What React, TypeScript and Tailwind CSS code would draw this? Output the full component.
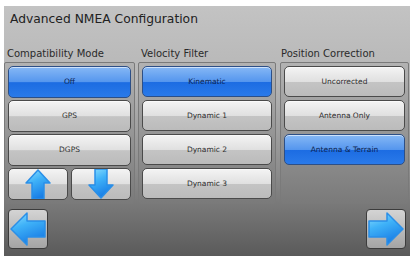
import clsx from "clsx"

const FONT = { fontFamily: '"DejaVu Sans", Verdana, sans-serif' }

const blueBtn =
  "bg-[linear-gradient(to_bottom,#86b8f5_0%,#5596ee_50%,#1c6ce2_52%,#2a7ae9_100%)] text-[#0b2350] border-[#2d4f86]"
const grayBtn =
  "bg-[linear-gradient(to_bottom,#f4f4f4_0%,#e0e0e0_50%,#c4c4c4_52%,#bbbbbb_100%)] text-[#2e2e2e] border-[#4a4a4a]"

function OptionButton({ label, active, h = "h-[32px]" }: { label: string; active?: boolean; h?: string }) {
  return (
    <div
      className={clsx(
        "flex items-center justify-center rounded-[5px] border text-[7.5px] shadow-[inset_0_1px_0_rgba(255,255,255,0.6)]",
        h,
        active ? blueBtn : grayBtn
      )}
    >
      {label}
    </div>
  )
}

// Blue glossy arrow; dir picks the shape
function Arrow({ dir, id }: { dir: "up" | "down" | "left" | "right"; id: string }) {
  const paths: Record<string, { vb: string; d: string; w: number; h: number }> = {
    up: { vb: "0 0 26 30", d: "M13 1 L25 14 L19 14 L19 30 L7 30 L7 14 L1 14 Z", w: 26, h: 30 },
    down: { vb: "0 0 26 30", d: "M13 29 L25 16 L19 16 L19 0 L7 0 L7 16 L1 16 Z", w: 26, h: 30 },
    left: { vb: "0 0 38 36", d: "M2 18 L18 2 L18 10 L36 10 L36 26 L18 26 L18 34 Z", w: 38, h: 36 },
    right: { vb: "0 0 38 36", d: "M36 18 L20 2 L20 10 L2 10 L2 26 L20 26 L20 34 Z", w: 38, h: 36 },
  }
  const p = paths[dir]
  return (
    <svg width={p.w} height={p.h} viewBox={p.vb}>
      <defs>
        <linearGradient id={id} x1="0" y1="0" x2="0.4" y2="1">
          <stop offset="0" stopColor="#8fe0ff" />
          <stop offset="0.45" stopColor="#3fb2f8" />
          <stop offset="1" stopColor="#1a7fe6" />
        </linearGradient>
      </defs>
      <path d={p.d} fill={`url(#${id})`} stroke="#2a8fe8" strokeWidth="1.5" strokeLinejoin="round" />
    </svg>
  )
}

function Column({ title, children, w, titlePad }: { title: string; children: React.ReactNode; w: string; titlePad: string }) {
  return (
    <div className={clsx("flex flex-col", w)}>
      <div className={clsx("text-[10px] leading-[12px] text-[#2a2a2a] whitespace-nowrap", titlePad)}>{title}</div>
      <div className="mt-[2px] h-[142px] rounded-[2px] border border-[#7a7a7a] bg-[linear-gradient(to_bottom,#b2b2b2,#7a7a7a)] px-[3px] pt-[3px] flex flex-col">
        {children}
      </div>
    </div>
  )
}

export default function App() {
  return (
    <div className="w-[415px] h-[256px] bg-white pt-[6px] pl-[4px] pr-[5px]" style={FONT}>
      <div className="h-[250px] flex flex-col bg-[linear-gradient(to_bottom,#c3c3c3_0%,#b6b6b6_30%,#8e8e8e_65%,#5a5a5a_100%)]">
        <div className="pl-[6px] pt-[6px] text-[12.3px] leading-[14px] text-[#222]">Advanced NMEA Configuration</div>

        <div className="mt-[22px] flex">
          <Column title="Compatibility Mode" w="w-[131px]" titlePad="pl-[3px]">
            <div className="flex flex-col gap-[2px]">
              <OptionButton label="Off" active />
              <OptionButton label="GPS" />
              <OptionButton label="DGPS" />
              <div className="flex gap-[3px]">
                <div className={clsx("flex-1 h-[32px] rounded-[5px] border flex items-end justify-center overflow-hidden", grayBtn)}>
                  <Arrow dir="up" id="au" />
                </div>
                <div className={clsx("flex-1 h-[32px] rounded-[5px] border flex items-end justify-center overflow-hidden", grayBtn)}>
                  <Arrow dir="down" id="ad" />
                </div>
              </div>
            </div>
          </Column>
          <div className="w-[3px]" />
          <Column title="Velocity Filter" w="w-[138px]" titlePad="pl-[3px]">
            <div className="flex flex-col gap-[3px]">
              <OptionButton label="Kinematic" active h="h-[31px]" />
              <OptionButton label="Dynamic 1" h="h-[31px]" />
              <OptionButton label="Dynamic 2" h="h-[31px]" />
              <OptionButton label="Dynamic 3" h="h-[31px]" />
            </div>
          </Column>
          <div className="w-[4px]" />
          <Column title="Position Correction" w="w-[129px]" titlePad="pl-[1px]">
            <div className="flex flex-col gap-[3px]">
              <OptionButton label="Uncorrected" h="h-[31px]" />
              <OptionButton label="Antenna Only" h="h-[31px]" />
              <OptionButton label="Antenna & Terrain" active h="h-[31px]" />
            </div>
          </Column>
        </div>

        <div className="mt-[5px] px-[4px] flex justify-between">
          <div className="w-[40px] h-[40px] rounded-[4px] border border-[#3c3c3c] bg-[linear-gradient(to_bottom,#d4d4d4,#a4a4a4)] flex items-center justify-center">
            <Arrow dir="left" id="al" />
          </div>
          <div className="w-[40px] h-[40px] rounded-[4px] border border-[#3c3c3c] bg-[linear-gradient(to_bottom,#d4d4d4,#a4a4a4)] flex items-center justify-center">
            <Arrow dir="right" id="ar" />
          </div>
        </div>
      </div>
    </div>
  )
}
